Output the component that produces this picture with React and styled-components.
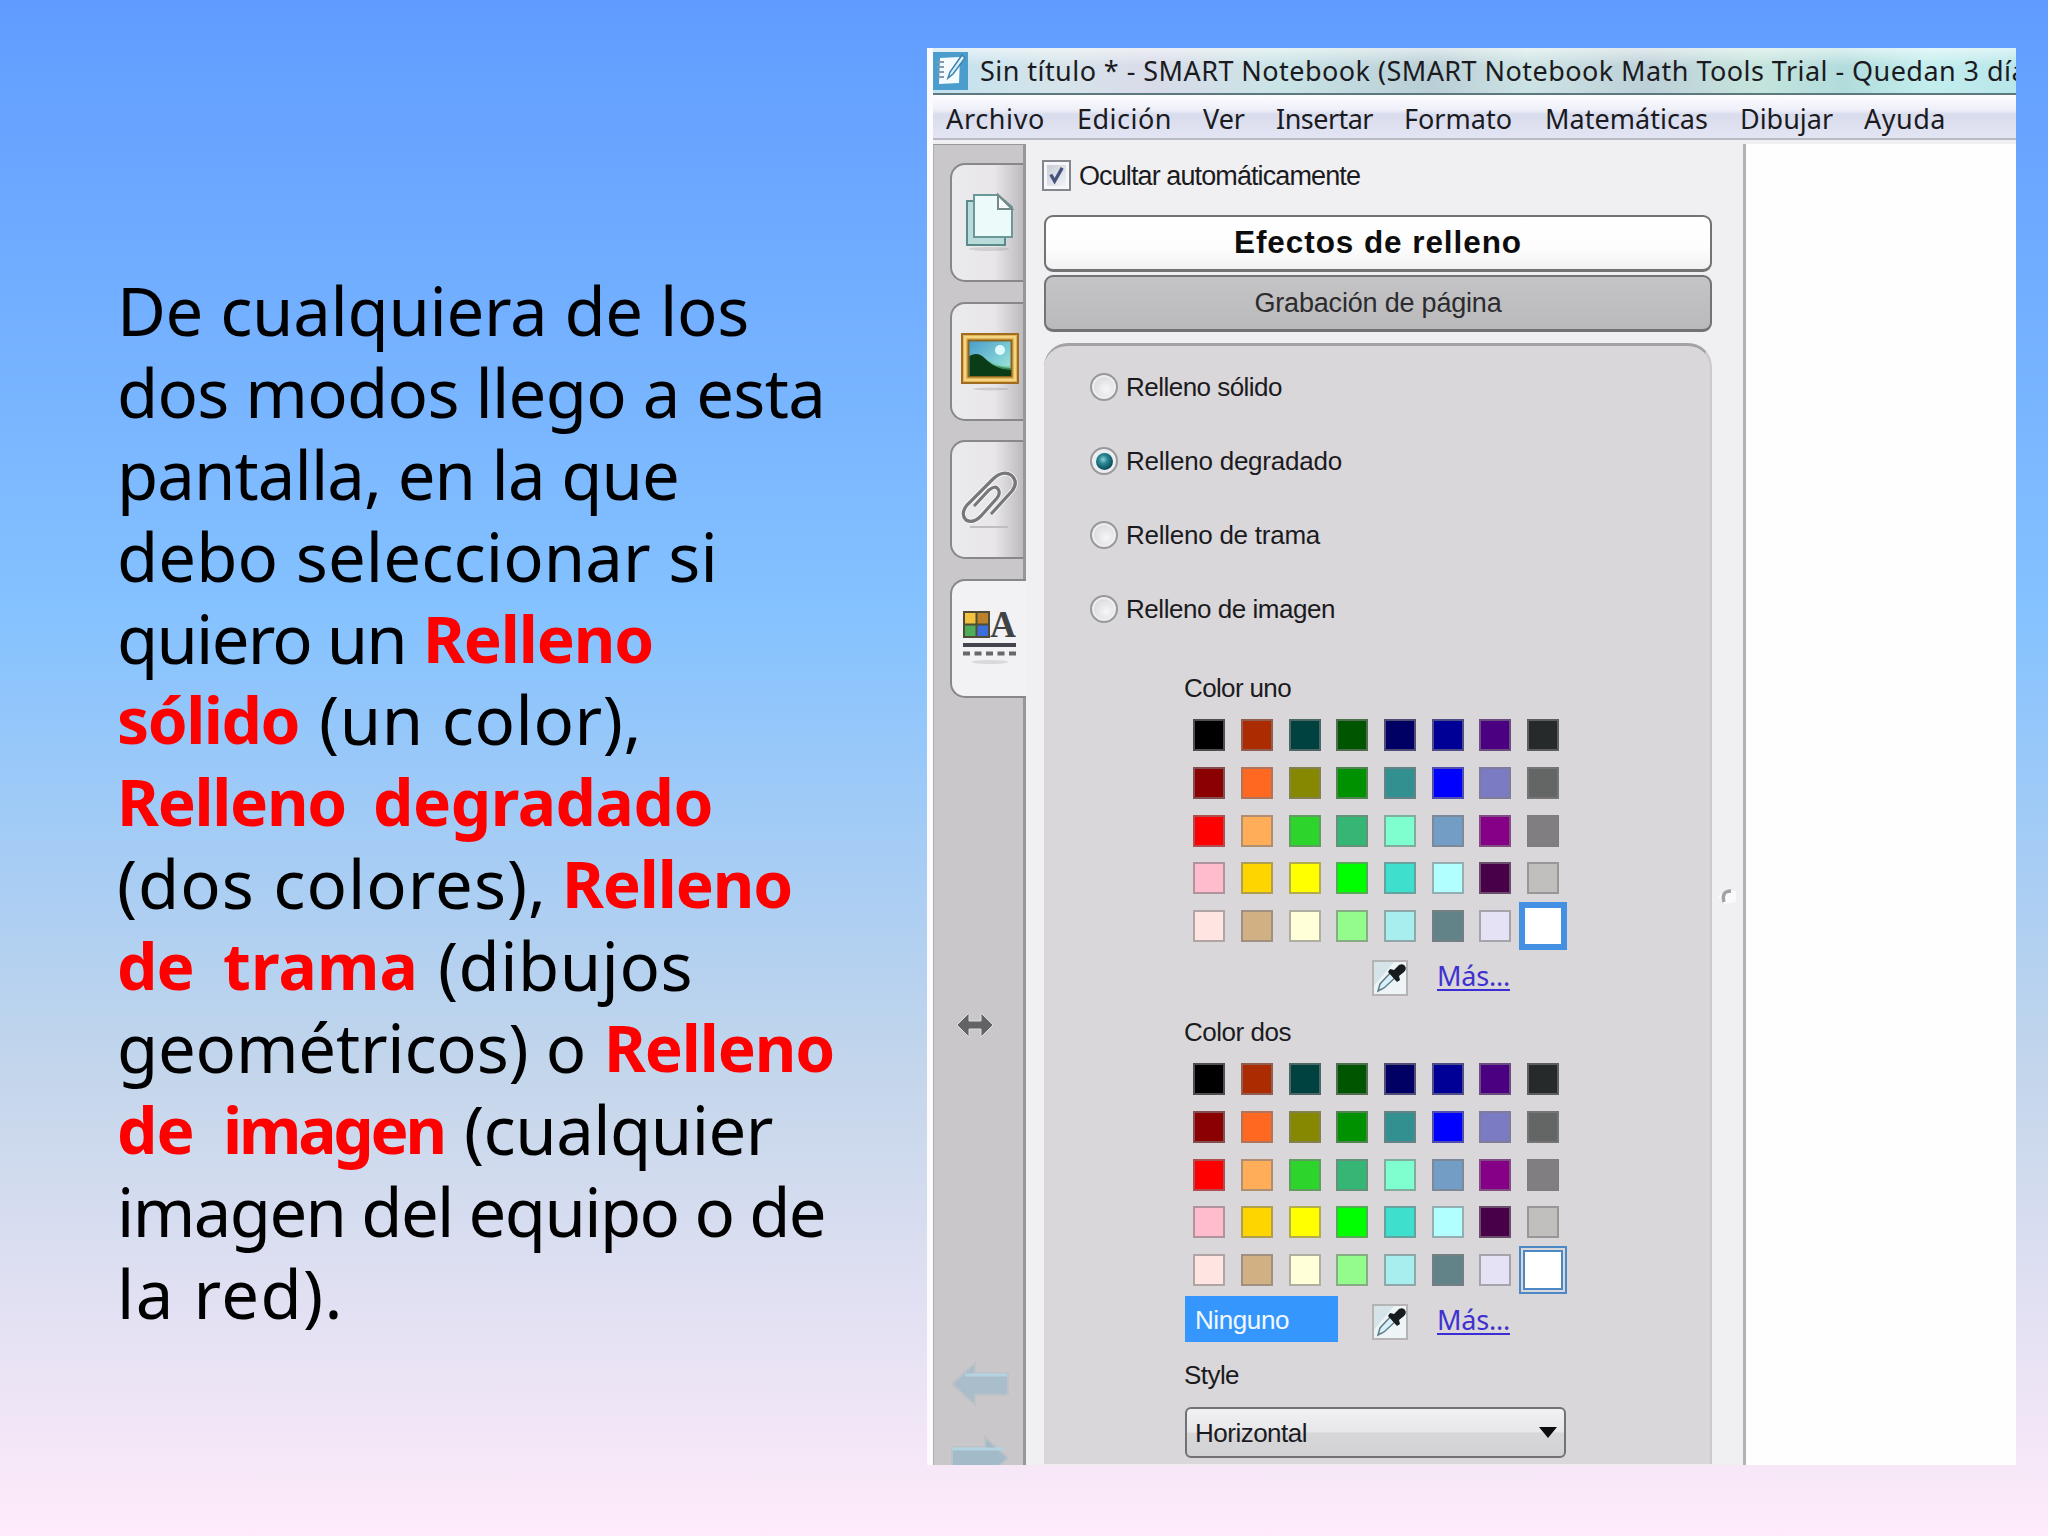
import React, { useLayoutEffect, useRef, useState } from "react";
import styled, { createGlobalStyle, css } from "styled-components";

const uiFont = '"Liberation Sans", Arial, sans-serif';
const segoe = '"Noto Sans", "Open Sans", sans-serif';
const comic = '"Comic Sans MS", "Noto Sans", sans-serif';

const GlobalStyle = createGlobalStyle`
  * { box-sizing: border-box; }
  body { margin: 0; }
`;

const FitBox = styled.span`
  display: inline-block;
  flex: none;
  white-space: nowrap;
  width: ${(p) => p.$w}px;
`;

/* Tracks a run of text so that it takes exactly the width it is given. */
function Fit({ w, children }) {
  const ref = useRef(null);
  const [spacing, setSpacing] = useState(0);
  useLayoutEffect(() => {
    const natural = ref.current.getBoundingClientRect().width;
    setSpacing((w - natural) / children.length);
  }, [w, children]);
  return (
    <FitBox $w={w}>
      <span ref={ref} style={{ letterSpacing: `${spacing}px` }}>{children}</span>
    </FitBox>
  );
}

const Slide = styled.main`
  width: 2048px;
  height: 1536px;
  display: flex;
  align-items: flex-start;
  overflow: hidden;
  background: linear-gradient(#609cff 0%, #85c2ff 40%, #c4d6eb 70%, #ffebfa 100%);
`;

const Explanation = styled.section`
  width: 927px;
  flex: none;
  padding: 270px 0 0 117px;
  font-family: ${comic};
  font-size: 67px;
  color: #000;
`;

const Line = styled.div`
  display: flex;
  height: 81.9px;
  line-height: 81.9px;
`;

const Run = styled.span`
  margin-left: ${(p) => p.$gap || 0}px;
  ${(p) => p.$strong && css`
    font-size: 64px;
    font-weight: 700;
    color: #ff0000;
  `}
`;

const Window = styled.section`
  width: 1089px;
  height: 1417px;
  margin-top: 48px;
  padding-left: 6px;
  display: flex;
  flex-direction: column;
  overflow: hidden;
  background: #fbfafd;
  font-family: ${uiFont};
  color: #1b1b1f;
`;

const TitleBar = styled.header`
  height: 47px;
  flex: none;
  display: flex;
  align-items: center;
  overflow: hidden;
  border-bottom: 2px solid #5e7880;
  background: linear-gradient(rgba(255, 255, 255, 0.55), rgba(255, 255, 255, 0) 40%),
    linear-gradient(90deg, #c2e2ee, #d6e4ea 12%, #d9dbe9 20%, #c9e4e6 32%, #b9ced6 46%, #cce3e4 55%, #bdd0d8 66%, #c5e4dc 76%, #b2dcdc 84%, #c4eeee 92%, #b8e6ea);
  font-family: ${segoe};
  font-size: 27px;
  line-height: 45px;
`;

const AppIcon = styled.svg`
  flex: none;
  width: 35px;
  height: 38px;
  margin-right: 12px;
`;

const MenuBar = styled.nav`
  height: 45px;
  flex: none;
  display: flex;
  padding-left: 13px;
  border-bottom: 2px solid #b9bac4;
  background: linear-gradient(#fdfdff 0, #eeeff8 35%, #d9dcec 45%, #e3e5f4 100%);
  font-family: ${segoe};
  font-size: 27px;
  line-height: 48px;
`;

const MenuItem = styled.span`
  margin-right: ${(p) => p.$gap}px;
`;

const Body = styled.div`
  flex: none;
  height: 1325px;
  padding-top: 4px;
  display: flex;
  background: #f0eff1;
`;

const SideBar = styled.aside`
  width: 93px;
  flex: none;
  padding: 18px 0 0 17px;
  border-top: 1px solid #97979b;
  border-left: 1px solid #aeaeb2;
  border-right: 3px solid #97969a;
  background: #c9c7c9;
  overflow: visible;
`;

const Tab = styled.div`
  width: ${(p) => (p.$active ? 76 : 73)}px;
  height: 119px;
  margin: 0 0 19.6px -1px;
  position: relative;
  border: 2px solid #88878a;
  border-right: 0;
  border-radius: 15px 0 0 15px;
  background: ${(p) => (p.$active ? "#f2f1f3" : "linear-gradient(90deg, #ebeaec 0, #e8e6e8 60%, #bdbbbe 100%)")};
  svg { display: block; margin: -2px 0 0 -2px; }
`;

const ResizeHandle = styled.svg`
  display: block;
  width: 38px;
  height: 26px;
  margin: 314px 0 0 5px;
`;

const PageArrow = styled.svg`
  display: block;
  width: 60px;
  height: 46px;
  margin: ${(p) => p.$top}px 0 0 -1px;
`;

const Panel = styled.div`
  width: 717px;
  flex: none;
  padding: 16px 0 0 16px;
`;

const AutoHide = styled.div`
  display: flex;
  align-items: center;
  height: 31px;
  gap: 8px;
  font-size: 27px;
  line-height: 34px;
`;

const CheckBox = styled.span`
  width: 29px;
  height: 31px;
  flex: none;
  padding: 3px;
  border: 2px solid #85868b;
  background: #f6f7fa;
  svg {
    display: block;
    width: 100%;
    height: 100%;
    background: linear-gradient(135deg, #c9cdd6, #f2f4f8);
  }
`;

const PanelButton = styled.div`
  width: 668px;
  height: 57px;
  margin: ${(p) => p.$top}px 0 0 2px;
  display: flex;
  justify-content: center;
  border: 2px solid #737275;
  border-bottom-width: 3px;
  border-radius: 9px;
  line-height: ${(p) => (p.$selected ? 51 : 53)}px;
  font-size: ${(p) => (p.$selected ? 31.5 : 27)}px;
  font-weight: ${(p) => (p.$selected ? 700 : 400)};
  color: ${(p) => (p.$selected ? "#0d0d0d" : "#2c2c2e")};
  background: ${(p) => (p.$selected ? "linear-gradient(#fff, #fdfdfd 60%, #f2f2f3)" : "linear-gradient(#c4c3c5, #bab9bb)")};
`;

const Group = styled.div`
  width: 668px;
  height: 1121px;
  margin: 11px 0 0 2px;
  padding-top: 4px;
  border-top: 3px solid #a3a2a5;
  border-right: 2px solid #cbcacc;
  border-radius: 24px 24px 0 0;
  background: #d9d7d9;
  font-size: 26px;
`;

const Option = styled.div`
  display: flex;
  align-items: center;
  height: 74px;
  padding-left: 46px;
  gap: 8px;
`;

const Radio = styled.span`
  width: 28px;
  height: 28px;
  flex: none;
  display: grid;
  place-items: center;
  border: 2px solid #98989c;
  border-radius: 50%;
  background: ${(p) => (p.$checked ? "#e6eff2" : "radial-gradient(circle at 60% 60%, #f6f6f7, #cfcfd3)")};
  box-shadow: inset 0 0 0 2px #eeeef0;
  &::after {
    content: "";
    display: ${(p) => (p.$checked ? "block" : "none")};
    width: 17px;
    height: 17px;
    border-radius: 50%;
    background: radial-gradient(circle at 42% 38%, #8fd0d8 0, #2a8794 30%, #0c4656 75%);
  }
`;

const Section = styled.div`
  margin: ${(p) => p.$top || 0}px 0 0 140px;
  height: ${(p) => p.$h}px;
`;

const Label = styled.div`
  height: 34px;
  line-height: 34px;
`;

const Swatches = styled.div`
  display: grid;
  grid-template-columns: repeat(8, 47.7px);
  grid-auto-rows: 47.7px;
  place-items: center;
  width: 381.6px;
  margin: 6.5px 0 0 1.5px;
`;

const Swatch = styled.span`
  width: 32px;
  height: 32px;
  border: 2px solid rgba(128, 124, 128, 0.62);
  background: ${(p) => p.$c};
  ${(p) => p.$pick === "solid" && css`
    width: 48px;
    height: 48px;
    border: 6px solid #4490e2;
  `}
  ${(p) => p.$pick === "double" && css`
    width: 48px;
    height: 48px;
    border: 6px double #4c88c6;
    background: #fff padding-box;
    box-shadow: inset 0 0 0 1px #fff;
  `}
`;

const Actions = styled.div`
  height: 64px;
  display: flex;
  align-items: flex-start;
  padding-left: 1px;
`;

const NoneSlot = styled.div`
  width: 187px;
  padding-top: 2px;
`;

const NoneChoice = styled.div`
  width: 153px;
  height: 46px;
  padding-left: 10px;
  line-height: 49px;
  background: #3597fd;
  color: #f2f8ff;
`;

const Dropper = styled.svg`
  width: 36px;
  height: 36px;
  margin-top: 10px;
`;

const More = styled.span`
  margin: 9px 0 0 29px;
  height: 32px;
  border-bottom: 2px solid #3c2cd4;
  font-family: ${segoe};
  font-size: 27px;
  line-height: 34px;
  color: #4030cf;
`;

const Select = styled.div`
  width: 381px;
  height: 51px;
  margin: 15px 0 0 1px;
  padding: 0 7px 0 8px;
  display: flex;
  align-items: center;
  justify-content: space-between;
  border: 2px solid #727175;
  border-radius: 6px;
  background: linear-gradient(#f1f0f2 0, #e7e6e8 48%, #d7d7d9 52%, #d2d2d4 100%);
  line-height: 50px;
`;

const Splitter = styled.div`
  width: 3px;
  background: #b3b2b5;
`;

const Collapse = styled.svg`
  display: block;
  width: 20px;
  height: 20px;
  margin: 555px 0 0 5px;
`;

const GroupRow = styled.div`
  display: flex;
`;

const Canvas = styled.div`
  flex: 1;
  background: #fefefe;
`;

const LINES = [
  [{ t: "De cualquiera de los", w: 632 }],
  [{ t: "dos modos llego a esta", w: 708 }],
  [{ t: "pantalla, en la que", w: 562 }],
  [{ t: "debo seleccionar si", w: 601 }],
  [{ t: "quiero un", w: 289 }, { t: "Relleno", w: 230, gap: 17, b: true }],
  [{ t: "sólido", w: 182, b: true }, { t: "(un color),", w: 323, gap: 20 }],
  [{ t: "Relleno", w: 229, b: true }, { t: "degradado", w: 340, gap: 27, b: true }],
  [{ t: "(dos colores),", w: 430 }, { t: "Relleno", w: 230, gap: 15, b: true }],
  [{ t: "de", w: 77, b: true }, { t: "trama", w: 195, gap: 29, b: true }, { t: "(dibujos", w: 255, gap: 20 }],
  [{ t: "geométricos) o", w: 469 }, { t: "Relleno", w: 230, gap: 18, b: true }],
  [{ t: "de", w: 77, b: true }, { t: "imagen", w: 221, gap: 29, b: true }, { t: "(cualquier", w: 309, gap: 20 }],
  [{ t: "imagen del equipo o de", w: 708 }],
  [{ t: "la red).", w: 227 }],
];

const MENU = [
  ["Archivo", 99, 32], ["Edición", 95, 31], ["Ver", 42, 31], ["Insertar", 97, 31],
  ["Formato", 108, 33], ["Matemáticas", 163, 32], ["Dibujar", 93, 31], ["Ayuda", 82, 0],
];

const OPTIONS = [
  ["Relleno sólido", 156], ["Relleno degradado", 216], ["Relleno de trama", 194], ["Relleno de imagen", 209],
];

const COLORS = [
  "#000000", "#aa2c00", "#00423f", "#005500", "#000064", "#000096", "#4b0082", "#272a2a",
  "#8b0000", "#ff6820", "#868800", "#009100", "#339090", "#0000ff", "#7b7bc4", "#646666",
  "#ff0000", "#ffad59", "#2cd42c", "#35b675", "#7fffd0", "#739dc4", "#850087", "#807e80",
  "#ffbccd", "#ffd500", "#ffff00", "#00ff00", "#3edfcc", "#b2ffff", "#480048", "#c0bfbe",
  "#ffe4e1", "#d1b184", "#ffffd8", "#94fb8d", "#a9eeee", "#628488", "#e6e2f6", "#ffffff",
];

const PagesIcon = () => (
  <svg width="74" height="119" viewBox="0 0 74 119">
    <ellipse cx="39" cy="86" rx="20" ry="2" fill="#000" opacity=".1" />
    <path d="M17 38h38v44H17z" fill="#b9dcda" stroke="#5a8b8c" strokeWidth="2" />
    <path d="M24 32h24l14 12v30H24z" fill="#ecfafa" stroke="#6c9798" strokeWidth="2" />
    <path d="M48 32v14h14z" fill="#f8fbfb" stroke="#73898a" strokeWidth="2" />
  </svg>
);

const PictureIcon = () => (
  <svg width="74" height="119" viewBox="0 0 74 119">
    <defs>
      <linearGradient id="sky" x2="1" y2="1">
        <stop stopColor="#479ccb" /><stop offset="1" stopColor="#a6efdc" />
      </linearGradient>
    </defs>
    <ellipse cx="41" cy="87" rx="18" ry="1.5" fill="#000" opacity=".12" />
    <path d="M12 32h56v49H12z" fill="#e3b455" stroke="#a06d20" strokeWidth="2" />
    <path d="M15 35h50v43H15z" fill="none" stroke="#f4d583" strokeWidth="2" />
    <path d="M18.500 38.500h43v36h-43z" fill="url(#sky)" stroke="#8a6420" strokeWidth="2" />
    <circle cx="50" cy="48" r="5" fill="#ddfbff" />
    <path d="M19.500 54q8-5 15 2t13 8q7 2 13.500 2v8h-41.500z" fill="#0b3c18" />
    <path d="M37 57q9 8 24 7v4q-16 0-24-11z" fill="#63bd80" opacity=".6" />
  </svg>
);

const ClipIcon = () => (
  <svg width="74" height="119" viewBox="0 0 74 119">
    <path d="M20 87h38" stroke="#bfbdc0" strokeWidth="2" />
    <path
      d="M25 65L39 50Q45 45 48 49Q51 53 47 58L31 76Q23 84 16 80Q10 74 17 65L43 39Q53 30 61 35Q69 42 62 51L42 73"
      fill="none" stroke="#fff" strokeWidth="5" opacity=".7"
    />
    <path
      d="M25 65L39 50Q45 45 48 49Q51 53 47 58L31 76Q23 84 16 80Q10 74 17 65L43 39Q53 30 61 35Q69 42 62 51L42 73"
      fill="none" stroke="#77767a" strokeWidth="3.200" strokeLinecap="round"
    />
  </svg>
);

const StyleIcon = () => (
  <svg width="74" height="119" viewBox="0 0 74 119">
    <path d="M13 32h13v13H13z" fill="#f3c340" />
    <path d="M26 32h13v13H26z" fill="#bb822b" />
    <path d="M13 45h13v13H13z" fill="#4fac58" />
    <path d="M26 45h13v13H26z" fill="#3c6fdc" />
    <path d="M14 33h25v25H14zM26.500 33v25M14 45.500h25" fill="none" stroke="#514c36" strokeWidth="2" />
    <text x="40" y="58" fontFamily="Liberation Serif, serif" fontWeight="700" fontSize="38" textLength="26" lengthAdjust="spacingAndGlyphs" fill="#3f4345">A</text>
    <path d="M13 66h53" stroke="#43454c" strokeWidth="4" />
    <path d="M13 74.500h53" stroke="#66686d" strokeWidth="4" strokeDasharray="7 4.500" />
    <ellipse cx="40" cy="83" rx="18" ry="2" fill="#000" opacity=".1" />
  </svg>
);

const TABS = [PagesIcon, PictureIcon, ClipIcon, StyleIcon];

function Eyedropper() {
  return (
    <Dropper viewBox="0 0 36 36">
      <path d="M1 1h34v34H1z" fill="#eef4f5" stroke="#b5b3b3" strokeWidth="2" />
      <path d="M2 2h20L2 26z" fill="#d5e4e8" />
      <path d="M6 31l2-7L20 11l5 5L12 28z" fill="#d8f0f8" stroke="#5d7d89" strokeWidth="1.500" />
      <path d="M18 9l4 1 5-5q4-2 6 1t-1 6l-5 4 1 4-3 2-9-10z" fill="#171b1d" />
    </Dropper>
  );
}

function ColorSection({ label, top, h, pick, none }) {
  return (
    <Section $top={top} $h={h}>
      <Label><Fit w={107}>{label}</Fit></Label>
      <Swatches>
        {COLORS.map((c, i) => (
          <Swatch key={i} $c={c} $pick={i === COLORS.length - 1 ? pick : undefined} />
        ))}
      </Swatches>
      <Actions>
        <NoneSlot>{none && <NoneChoice><Fit w={94}>Ninguno</Fit></NoneChoice>}</NoneSlot>
        <Eyedropper />
        <More><Fit w={73}>Más...</Fit></More>
      </Actions>
    </Section>
  );
}

export default function App() {
  return (
    <Slide>
      <GlobalStyle />
      <Explanation>
        {LINES.map((runs, i) => (
          <Line key={i}>
            {runs.map((r) => (
              <Run key={r.t} $gap={r.gap} $strong={r.b}><Fit w={r.w}>{r.t}</Fit></Run>
            ))}
          </Line>
        ))}
      </Explanation>
      <Window>
        <TitleBar>
          <AppIcon viewBox="0 0 35 38">
            <path d="M0 0h35v38H0z" fill="#4a9dcc" />
            <path d="M7 6l20-1-1 26-20 1z" fill="#f4fbff" />
            <path d="M4 10h7M4 15h7M4 20h7M4 25h7" stroke="#8199b3" strokeWidth="2" />
            <path d="M29 3L17 20l-2 6 5-4L32 6z" fill="#d8f1fc" stroke="#3d83ac" strokeWidth="1.500" />
          </AppIcon>
          <Fit w={1047}>Sin título * - SMART Notebook (SMART Notebook Math Tools Trial - Quedan 3 día</Fit>
        </TitleBar>
        <MenuBar>
          {MENU.map(([t, w, gap]) => (
            <MenuItem key={t} $gap={gap}><Fit w={w}>{t}</Fit></MenuItem>
          ))}
        </MenuBar>
        <Body>
          <SideBar>
            {TABS.map((Icon, i) => (
              <Tab key={i} $active={i === 3}><Icon /></Tab>
            ))}
            <ResizeHandle viewBox="0 0 38 26">
              <path d="M1 13L13 1v8h12V1l12 12-12 12v-8H13v8z" fill="#636266" stroke="#dddcde" />
            </ResizeHandle>
            <PageArrow $top={323} viewBox="0 0 60 46">
              <path d="M2 23L25 2v10h33v22H25v10z" fill="#a9bdca" stroke="#bfc2c6" strokeWidth="2" />
              <path d="M15 14h42" stroke="#b4d3e2" strokeWidth="3" />
            </PageArrow>
            <PageArrow $top={28} viewBox="0 0 60 46">
              <path d="M58 23L35 2v10H2v22h33v10z" fill="#a3bac8" stroke="#bfc2c6" strokeWidth="2" />
              <path d="M2 14h52" stroke="#b4d3e2" strokeWidth="3" />
            </PageArrow>
          </SideBar>
          <Panel>
            <AutoHide>
              <CheckBox>
                <svg viewBox="0 0 20 22">
                  <path d="M4 10l4 7L16 3" fill="none" stroke="#45527c" strokeWidth="3.500" />
                </svg>
              </CheckBox>
              <Fit w={281}>Ocultar automáticamente</Fit>
            </AutoHide>
            <PanelButton $top={24} $selected><Fit w={288}>Efectos de relleno</Fit></PanelButton>
            <PanelButton $top={3}><Fit w={247}>Grabación de página</Fit></PanelButton>
            <GroupRow>
              <Group>
                {OPTIONS.map(([t, w], i) => (
                  <Option key={t}><Radio $checked={i === 1} /><Fit w={w}>{t}</Fit></Option>
                ))}
                <ColorSection label="Color uno" top={25} h={344} pick="solid" />
                <ColorSection label="Color dos" h={343} pick="double" none />
                <Section>
                  <Label><Fit w={55}>Style</Fit></Label>
                  <Select>
                    <Fit w={112}>Horizontal</Fit>
                    <svg width="18" height="11" viewBox="0 0 18 11"><path d="M0 0h18L9 11z" fill="#0c0c0c" /></svg>
                  </Select>
                </Section>
              </Group>
              <Collapse viewBox="0 0 20 20">
                <path d="M1 10L8 3l11 1v11l-11 2z" fill="#faf9fb" />
                <path d="M14 4Q4 4 7 15" fill="none" stroke="#a2a1a5" strokeWidth="3.500" />
              </Collapse>
            </GroupRow>
          </Panel>
          <Splitter />
          <Canvas />
        </Body>
      </Window>
    </Slide>
  );
}
